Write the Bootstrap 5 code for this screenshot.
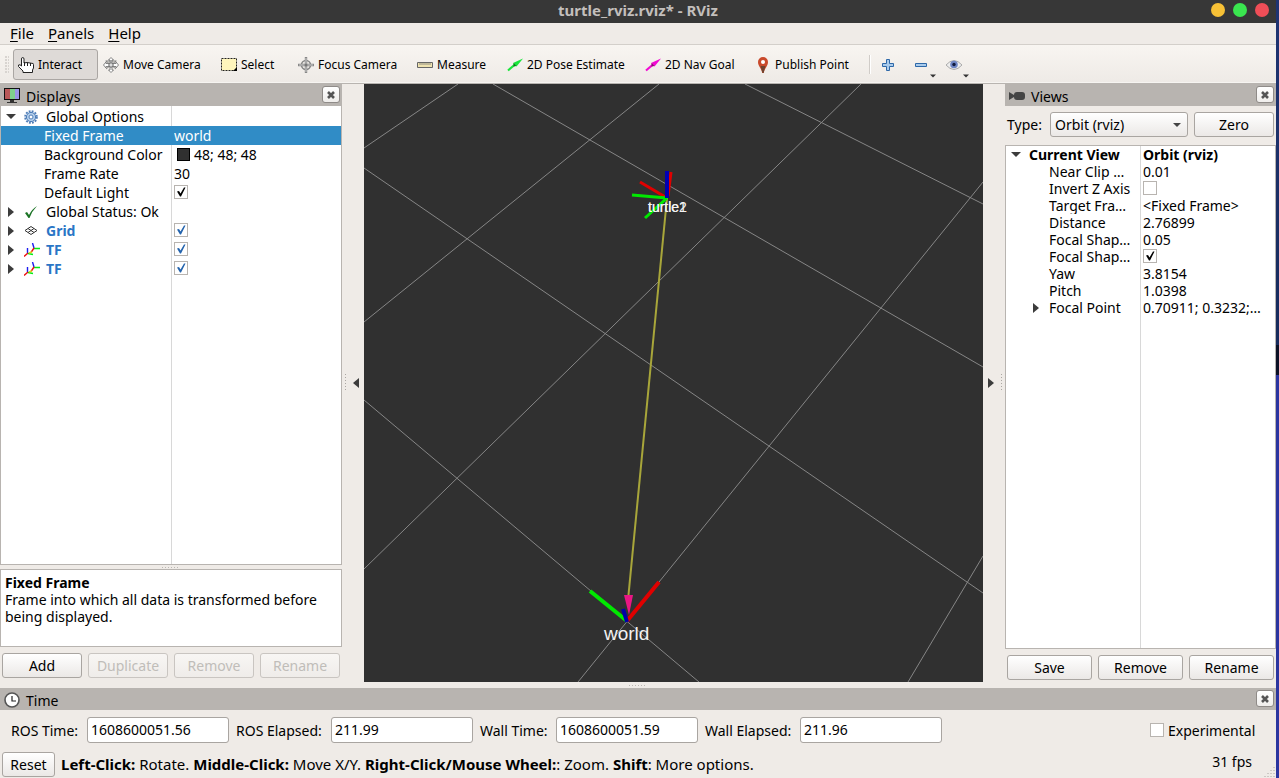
<!DOCTYPE html>
<html lang="en">
<head>
<meta charset="utf-8">
<meta name="viewport" content="width=device-width, initial-scale=1">
<title>turtle_rviz.rviz* - RViz</title>
<link rel="stylesheet" href="https://cdn.jsdelivr.net/npm/bootstrap@5.3.0/dist/css/bootstrap.min.css">
<style>
  :root { --win: #efebe7; --line: #b8b4b0; --dock: #b8b4b0; --sel: #308cc6; }
  body { font-family: "Noto Sans", "Open Sans", sans-serif; font-size: 14px; line-height: 17px; color: #000; background: var(--win); }
  .desktop-edge { width: 3px; background: linear-gradient(#1f3473 0, #172b5c 345px, #0c1226 345px, #0c1226 375px, #2b35a0 375px); }
  .title-bar { height: 23px; background: #373737; color: #c3bfbc; font-weight: 700; font-size: 15px; line-height: 20px; }
  .win-dots { top: 3px; right: 7px; gap: 8px; }
  .win-dots button { width: 14px; height: 14px; border: 0; padding: 0; border-radius: 50%; }
  .dot-min { background: #f7c136; } .dot-max { background: #3ae64f; } .dot-close { background: #f04e57; }
  .menu-bar { height: 22px; border-bottom: 1px solid #d3cfca; padding-left: 10px; gap: 14px; font-size: 15px; }
  .menu-bar a { color: #000; text-decoration: none; line-height: 21px; }
  .menu-bar u { text-underline-offset: 2px; }
  .tool-bar { height: 39px; background: linear-gradient(#f8f5f1, #eeeae6); border-bottom: 1px solid var(--line); padding: 4px 0 3px 5px; box-shadow: inset 0 -1px #f6f4f1; }
  .grip { width: 4px; height: 17px; margin-right: 4px; background: radial-gradient(circle at 1px 1px, #d8d4d0 1px, transparent 1px) 0 0 / 3px 3px; }
  .tool { display: flex; align-items: center; gap: 4px; padding: 0 0 0 4px; height: 31px; border: 1px solid transparent; border-radius: 3px; background: none; color: #000; font-size: 12px; white-space: nowrap; text-align: left; }
  .tool svg { flex: none; width: 16px; height: 16px; }
  .tool.active { background: #dedad7; border-color: #aaa6a3; }
  .w-interact { width: 85px; } .w-move { width: 118px; } .w-select { width: 77px; } .w-focus { width: 119px; }
  .w-measure { width: 90px; } .w-pose { width: 138px; } .w-nav { width: 110px; } .w-point { width: 119px; }
  .tool-sep { width: 2px; height: 19px; background: #d0ccc8; border-right: 1px solid #fff; }
  .tool-small { width: 33px; height: 30px; border: 0; background: none; padding: 0 0 2px; }
  .drop-mark { right: 1px; bottom: 1px; }
  .dock-title { height: 22px; background: var(--dock); padding: 2px 2px 0 4px; gap: 6px; flex: none; }
  .dock-close { width: 18px; height: 17px; padding: 0; margin-left: auto; margin-bottom: 3px; border: 1px solid #8f8b88; border-radius: 3px; background: linear-gradient(#fff, #efedeb); display: flex; align-items: center; justify-content: center; }
  .left-dock { width: 342px; } .right-dock { width: 271px; }
  .tree-box { border: 1px solid var(--line); background: linear-gradient(#d8d8d8, #d8d8d8) 0 0 / 1px 100% no-repeat #fff; }
  .tree-left { background-position-x: 170px; border-top: 0; padding-top: 1px; }
  .tree-right { background-position-x: 134px; }
  .tree-box table { width: 100%; table-layout: fixed; border-collapse: collapse; }
  .tree-box td { padding: 0; white-space: nowrap; overflow: hidden; }
  .tree-left td { height: 19px; line-height: 19px; }
  .tree-right td { height: 17px; line-height: 17px; }
  .tree-left col:first-child { width: 173px; } .tree-right col:first-child { width: 137px; }
  .cell { display: flex; align-items: center; }
  .tree-left .cell { height: 19px; } .tree-right .cell { height: 17px; }
  .fold { width: 19px; flex: none; display: flex; justify-content: center; }
  .tree-right .fold { width: 23px; padding-right: 3px; }
  .kind { width: 26px; flex: none; padding-left: 4px; display: flex; }
  .tree-box td.sub-item { padding-left: 43px; }
  .nested { padding-left: 20px; }
  .picked { background: var(--sel); color: #fff; }
  .shown { color: #2a76c6; font-weight: 700; }
  .swatch { width: 13px; height: 13px; margin: 0 4px 0 3px; background: #303030; border: 1px solid #000; }
  .form-check-input.box { width: 14px; height: 14px; margin: 0; border: 1px solid var(--line); border-radius: 0; background-color: #fff; flex: none; float: none; }
  .tree-box .form-check-input.box { margin-bottom: 2px; }
  .form-check-input.box:checked { background-color: #fff; border-color: var(--line); background-image: url("data:image/svg+xml,%3Csvg xmlns='http://www.w3.org/2000/svg' viewBox='0 0 12 12'%3E%3Cpath d='M2 5.5 4 5l1.500 2.500L9 1.500h1.500L6 10.500H5z' fill='%23000'/%3E%3C/svg%3E"); background-size: 12px; }
  .form-check-input.box.blue:checked { background-image: url("data:image/svg+xml,%3Csvg xmlns='http://www.w3.org/2000/svg' viewBox='0 0 12 12'%3E%3Cpath d='M2 5.5 4 5l1.500 2.500L9 1.500h1.500L6 10.500H5z' fill='%232363ad'/%3E%3C/svg%3E"); }
  .help-box { height: 78px; border: 1px solid var(--line); background: #fff; padding: 4px; }
  .dots-h { width: 18px; height: 1px; background: repeating-linear-gradient(90deg, #bbb7b3 0 1px, transparent 1px 3px); }
  .dots-v { width: 1px; height: 18px; background: repeating-linear-gradient(#aaa6a2 0 1px, transparent 1px 3px); }
  .split-h { height: 4px; } .split-main { height: 6px; }
  .btn-qt { --bs-btn-padding-x: 0; --bs-btn-padding-y: 0; --bs-btn-font-size: 14px; --bs-btn-line-height: 17px; --bs-btn-border-radius: 3px; --bs-btn-border-color: #a9a5a1; --bs-btn-color: #000; --bs-btn-disabled-color: #c0bdb9; --bs-btn-disabled-border-color: #c9c5c1; --bs-btn-disabled-opacity: 1; height: 25px; flex: 1 1 0; background: linear-gradient(#fff, #ebe8e6); }
  .btn-qt:disabled { background: linear-gradient(#f8f6f4, #efece9); }
  .left-buttons { padding: 6px 2px 4px; gap: 6px; }
  .right-buttons { padding: 6px 2px 2px; gap: 6px; }
  .side-bar { width: 22px; flex: none; border: 0; background: none; padding: 0 3px; gap: 7px; }
  .view3d { background: #303030; min-width: 0; }
  .view3d text { font-family: "Liberation Sans", Arial, sans-serif; fill: #f2f2f2; }
  .type-row { padding: 6px 2px 8px; gap: 6px; }
  .type-row select { height: 25px; width: 138px; font-size: 14px; line-height: 17px; padding: 0 20px 0 4px; color: #000; border: 1px solid #a9a5a1; border-radius: 3px; background: url("data:image/svg+xml,%3Csvg xmlns='http://www.w3.org/2000/svg' viewBox='0 0 8 4'%3E%3Cpath d='M0 0h8L4 4z' fill='%23444'/%3E%3C/svg%3E") right 6px center / 8px 4px no-repeat, linear-gradient(#fff, #ebe8e6); }
  .type-row label { width: 37px; white-space: nowrap; }
  .time-row { padding: 7px 17px 0 11px; gap: 7px; }
  .time-row input.form-control { width: 142px; height: 26px; font-size: 14px; line-height: 17px; padding: 0 3px 1px; color: #000; border: 1px solid #a9a5a1; border-radius: 3px; flex: none; }
  .lab-short { width: 69px; } .lab-long { width: 88px; } .lab-check { width: 91px; }
  .time-row label { white-space: nowrap; padding-top: 1px; flex: none; }
  .status-row { padding: 9px 0 1px 2px; gap: 6px; }
  .status-row .btn-qt { flex: none; width: 53px; }
  .mouse-help { font-size: 15px; }
  .fps { padding-right: 24px; padding-bottom: 6px; }
  .size-grip { right: 0; bottom: 0; }
</style>
</head>
<body>
<svg width="0" height="0" class="position-absolute" aria-hidden="true">
  <defs>
    <symbol id="x-mark" viewBox="0 0 8 8"><path d="M1 1l6 6M7 1L1 7" stroke="#555" stroke-width="2.600"/></symbol>
    <symbol id="open" viewBox="0 0 10 6"><path d="M0 0h10L5 5z" fill="#3c3c3c"/></symbol>
    <symbol id="closed" viewBox="0 0 6 10"><path d="M0 0v10l6-5z" fill="#3c3c3c"/></symbol>
    <symbol id="axes" viewBox="0 0 16 14"><g fill="none" stroke-width="1.400"><path d="M10 5L8.500 0M3.500 5v5" stroke="#1c1cf0"/><path d="M10 5.500h6M4 10.500l5 1" stroke="#0e1"/><path d="M10 5L7 9.500M4 10l-4 3.500" stroke="#e11"/><path d="M5 10l3-1" stroke="#e5d020"/></g></symbol>
    <symbol id="drop" viewBox="0 0 6 3"><path d="M0 0h6L3 3z" fill="#333"/></symbol>
  </defs>
</svg>
<div class="d-flex vh-100">
<div class="d-flex flex-column flex-grow-1 overflow-hidden">
  <header class="title-bar position-relative text-center flex-shrink-0">turtle_rviz.rviz* - RViz
    <div class="win-dots position-absolute d-flex"><button class="dot-min" aria-label="Minimize"></button><button class="dot-max" aria-label="Maximize"></button><button class="dot-close" aria-label="Close"></button></div>
  </header>
  <nav class="menu-bar d-flex flex-shrink-0"><a href="#"><u>F</u>ile</a><a href="#"><u>P</u>anels</a><a href="#"><u>H</u>elp</a></nav>
  <div class="tool-bar d-flex align-items-center flex-shrink-0" role="toolbar">
    <span class="grip"></span>
    <button class="tool w-interact active"><svg viewBox="0 0 16 16"><path d="M3.500 9V2q0-1.500 1.200-1.500T6 2v4l3-.5 3 .5 3 .5q.5 0 .5 1V11l-1 2v2.500H5V14L.5 9.500V8q1.500-1 3 1z" fill="#fff" stroke="#222"/><path d="M6.500 5v4M9.500 6v3M12.500 6v3" stroke="#222"/></svg>Interact</button>
    <button class="tool w-move"><svg viewBox="0 0 16 16"><path d="M8 .5L10.500 3H9v3.500h4V5l2.500 3-2.500 3V9.500H9V13h1.500L8 15.500 5.500 13H7V9.500H3V11L.5 8 3 5v1.500h4V3H5.500zM2.500 4h11M3 12l10-8M13 12L3 4" fill="#fff" stroke="#777" stroke-width=".9"/><circle cx="8" cy="8" r="2.200" fill="#ddd" stroke="#666"/></svg>Move Camera</button>
    <button class="tool w-select"><svg viewBox="0 0 16 16"><path d="M.5 1.500h15v12H.5z" fill="#fff6bc" stroke="#222" stroke-dasharray="2 1"/><path d="M16 10v4h-4z" fill="#000"/></svg>Select</button>
    <button class="tool w-focus"><svg viewBox="0 0 16 16"><circle cx="8" cy="8" r="4.500" fill="none" stroke="#888" stroke-width="1.600"/><path d="M8 0v16M0 8h16" stroke="#888" stroke-width="2.400"/><path d="M8 1v14M1 8h14" stroke="#ddd" stroke-width=".8"/><circle cx="8" cy="8" r="1.500" fill="#777"/></svg>Focus Camera</button>
    <button class="tool w-measure"><svg viewBox="0 0 16 16"><path d="M.5 5.500h15v5H.5z" fill="#efe3b0" stroke="#666"/><path d="M3 6v2M5 6v2M7 6v2M9 6v2M11 6v2M13 6v2" stroke="#777" stroke-width=".8"/></svg>Measure</button>
    <button class="tool w-pose"><svg viewBox="0 0 16 16"><path d="M1 13.500L8 7.500" stroke="#1be53c" stroke-width="2.200"/><path d="M16 1.500L6 6l3.500 3.500z" fill="#1be53c"/><path d="M6.500 6l3 3-3 .5z" fill="#0a7a1c"/></svg>2D Pose Estimate</button>
    <button class="tool w-nav"><svg viewBox="0 0 16 16"><path d="M1 13.500L8 7.500" stroke="#f10ad2" stroke-width="2.200"/><path d="M16 1.500L6 6l3.500 3.500z" fill="#f10ad2"/><path d="M6.500 6l3 3-3 .5z" fill="#84106f"/></svg>2D Nav Goal</button>
    <button class="tool w-point"><svg viewBox="0 0 16 16"><path d="M8 0a5 5 0 0 1 5 5c0 4-3.500 6-4.200 11H7.200C6.500 11 3 9 3 5a5 5 0 0 1 5-5z" fill="#c94a2c"/><path d="M10.500 9L8.500 16H7.500L5.500 9z" fill="#6e4330"/><circle cx="8" cy="5" r="2" fill="#fff"/></svg>Publish Point</button>
    <span class="tool-sep"></span>
    <button class="tool-small" aria-label="Add tool"><svg width="14" height="14" viewBox="0 0 14 14"><path d="M5.500 1.500h3v4h4v3h-4v4h-3v-4h-4v-3h4z" fill="#a9cbec" stroke="#2e68a8"/></svg></button>
    <button class="tool-small position-relative" aria-label="Remove tool"><svg width="14" height="14" viewBox="0 0 14 14"><path d="M1.500 5.500h11v3h-11z" fill="#a9cbec" stroke="#2e68a8"/></svg><svg class="position-absolute drop-mark" width="6" height="6"><use href="#drop"/></svg></button>
    <button class="tool-small position-relative" aria-label="Tool visibility"><svg width="16" height="14" viewBox="0 0 16 14"><path d="M0 7q8-9 16 0-8 9-16 0z" fill="#eee" stroke="#aaa"/><circle cx="8" cy="6.500" r="3.800" fill="#6f86c4"/><circle cx="8" cy="6.500" r="1.700" fill="#111a3c"/></svg><svg class="position-absolute drop-mark" width="6" height="6"><use href="#drop"/></svg></button>
  </div>

  <main class="d-flex flex-grow-1 overflow-hidden">
    <section class="left-dock d-flex flex-column flex-shrink-0">
      <div class="dock-title d-flex align-items-center"><svg width="16" height="16" viewBox="0 0 16 16"><path d="M0 0h16v12H0z" fill="#111"/><path d="M1 1h5v10H1z" fill="#b95959"/><path d="M6 1h5v10H6z" fill="#7ed08c"/><path d="M11 1h4v10h-4z" fill="#9a94e6"/><path d="M6 12h4v2H6zM3 14h10v1H3z" fill="#333"/></svg>Displays<button class="dock-close" aria-label="Close Displays"><svg width="8" height="8"><use href="#x-mark"/></svg></button></div>
      <div class="tree-box tree-left flex-grow-1 overflow-hidden">
        <table><colgroup><col><col></colgroup>
          <tr><td><div class="cell"><span class="fold"><svg width="10" height="6"><use href="#open"/></svg></span><span class="kind"><svg width="14" height="14" viewBox="0 0 14 14"><circle cx="7" cy="7" r="5.800" fill="none" stroke="#4e7db8" stroke-width="2" stroke-dasharray="1.800 1.240"/><circle cx="7" cy="7" r="4.600" fill="#b2cdea" stroke="#4e7db8"/><circle cx="7" cy="7" r="2" fill="#fff" stroke="#4e7db8"/></svg></span>Global Options</div></td><td></td></tr>
          <tr class="picked"><td class="sub-item">Fixed Frame</td><td>world</td></tr>
          <tr><td class="sub-item">Background Color</td><td><div class="cell"><span class="swatch"></span>48; 48; 48</div></td></tr>
          <tr><td class="sub-item">Frame Rate</td><td>30</td></tr>
          <tr><td class="sub-item"><label for="light">Default Light</label></td><td><div class="cell"><input class="form-check-input box" type="checkbox" id="light" checked></div></td></tr>
          <tr><td><div class="cell"><span class="fold"><svg width="6" height="10"><use href="#closed"/></svg></span><span class="kind"><svg width="14" height="14" viewBox="0 0 14 14"><path d="M1 8l2-1 2 3q3-6 8-9Q8 6 5.500 13h-1z" fill="#1c7426"/></svg></span>Global Status: Ok</div></td><td></td></tr>
          <tr><td><div class="cell"><span class="fold"><svg width="6" height="10"><use href="#closed"/></svg></span><span class="kind"><svg width="14" height="14" viewBox="0 0 14 14"><path d="M1 6.500l6-4 6 4-6 4zM4 4.500l6 4M10 4.500l-6 4" fill="none" stroke="#333"/></svg></span><label class="shown" for="grid">Grid</label></div></td><td><div class="cell"><input class="form-check-input box blue" type="checkbox" id="grid" checked></div></td></tr>
          <tr><td><div class="cell"><span class="fold"><svg width="6" height="10"><use href="#closed"/></svg></span><span class="kind"><svg width="16" height="14"><use href="#axes"/></svg></span><label class="shown" for="tf1">TF</label></div></td><td><div class="cell"><input class="form-check-input box blue" type="checkbox" id="tf1" checked></div></td></tr>
          <tr><td><div class="cell"><span class="fold"><svg width="6" height="10"><use href="#closed"/></svg></span><span class="kind"><svg width="16" height="14"><use href="#axes"/></svg></span><label class="shown" for="tf2">TF</label></div></td><td><div class="cell"><input class="form-check-input box blue" type="checkbox" id="tf2" checked></div></td></tr>
        </table>
      </div>
      <div class="split-h d-flex justify-content-center align-items-center"><span class="dots-h"></span></div>
      <div class="help-box"><strong>Fixed Frame</strong><br>Frame into which all data is transformed before being displayed.</div>
      <div class="d-flex left-buttons"><button class="btn btn-qt">Add</button><button class="btn btn-qt" disabled>Duplicate</button><button class="btn btn-qt" disabled>Remove</button><button class="btn btn-qt" disabled>Rename</button></div>
    </section>
    <button class="side-bar d-flex align-items-center" aria-label="Collapse left panel"><span class="dots-v"></span><svg width="6" height="10" viewBox="0 0 6 10"><path d="M6 0v10L0 5z" fill="#3c3c3c"/></svg></button>

    <svg class="view3d flex-grow-1 h-100" viewBox="364 84 619 598" preserveAspectRatio="xMidYMid slice">
      <g stroke="#868686" stroke-width="1">
        <path d="M364 148L458 84M364 322L659 84M364 569L861 84M578 682L983 182M908 682L983 556"/>
        <path d="M745 84L983 204M493 84L983 367M364 168L983 593M364 400L699 682"/>
      </g>
      <path d="M667 198L628 600" stroke="#a8a63a" stroke-width="2"/>
      <g stroke-width="3">
        <path d="M667 198L640 182M668 196L671 172" stroke="#e00000"/>
        <path d="M667 198L632 195M667 198L645 218" stroke="#00e800"/>
      </g>
      <path d="M667 198V171" stroke="#0000b4" stroke-width="4"/>
      <path d="M627 621L590 591" stroke="#00e800" stroke-width="4"/>
      <path d="M627 621L659 582" stroke="#e00000" stroke-width="4"/>
      <path d="M624 595h9l-4 20z" fill="#ea1684"/>
      <path d="M627 622L623 609" stroke="#0000a8" stroke-width="4"/>
      <text x="648" y="212" font-size="14">turtle1</text>
      <text x="648" y="212" font-size="14">turtle2</text>
      <text x="604" y="640" font-size="19">world</text>
    </svg>

    <button class="side-bar d-flex align-items-center justify-content-end" aria-label="Collapse right panel"><svg width="6" height="10"><use href="#closed"/></svg><span class="dots-v"></span></button>
    <section class="right-dock d-flex flex-column flex-shrink-0">
      <div class="dock-title d-flex align-items-center"><svg width="16" height="16" viewBox="0 0 16 16"><path d="M0 4l5 3V9L0 12z" fill="#444"/><rect x="5" y="4" width="11" height="8" rx="3" fill="#444"/></svg>Views<button class="dock-close" aria-label="Close Views"><svg width="8" height="8"><use href="#x-mark"/></svg></button></div>
      <div class="type-row d-flex align-items-center"><label for="vtype">Type:</label><select id="vtype" class="form-select"><option>Orbit (rviz)</option></select><button class="btn btn-qt">Zero</button></div>
      <div class="tree-box tree-right flex-grow-1 overflow-hidden">
        <table><colgroup><col><col></colgroup>
          <tr class="fw-bold"><td><div class="cell"><span class="fold"><svg width="10" height="6"><use href="#open"/></svg></span>Current View</div></td><td>Orbit (rviz)</td></tr>
          <tr><td class="sub-item">Near Clip …</td><td>0.01</td></tr>
          <tr><td class="sub-item"><label for="inv">Invert Z Axis</label></td><td><div class="cell"><input class="form-check-input box" type="checkbox" id="inv"></div></td></tr>
          <tr><td class="sub-item">Target Fra…</td><td>&lt;Fixed Frame&gt;</td></tr>
          <tr><td class="sub-item">Distance</td><td>2.76899</td></tr>
          <tr><td class="sub-item">Focal Shap…</td><td>0.05</td></tr>
          <tr><td class="sub-item"><label for="fshape">Focal Shap…</label></td><td><div class="cell"><input class="form-check-input box" type="checkbox" id="fshape" checked></div></td></tr>
          <tr><td class="sub-item">Yaw</td><td>3.8154</td></tr>
          <tr><td class="sub-item">Pitch</td><td>1.0398</td></tr>
          <tr><td><div class="cell nested"><span class="fold"><svg width="6" height="10"><use href="#closed"/></svg></span>Focal Point</div></td><td>0.70911; 0.3232;…</td></tr>
        </table>
      </div>
      <div class="d-flex right-buttons"><button class="btn btn-qt">Save</button><button class="btn btn-qt">Remove</button><button class="btn btn-qt">Rename</button></div>
    </section>
  </main>
  <div class="split-main d-flex justify-content-center align-items-center flex-shrink-0"><span class="dots-h"></span></div>

  <section class="flex-shrink-0 position-relative">
    <div class="dock-title d-flex align-items-center"><svg width="16" height="16" viewBox="0 0 16 16"><circle cx="8" cy="8" r="7" fill="#fff" stroke="#555" stroke-width="1.600"/><path d="M8 4v5h4" fill="none" stroke="#222" stroke-width="1.200"/></svg>Time<button class="dock-close" aria-label="Close Time"><svg width="8" height="8"><use href="#x-mark"/></svg></button></div>
    <div class="time-row d-flex align-items-center">
      <label class="lab-short" for="t1">ROS Time:</label><input class="form-control" id="t1" value="1608600051.56">
      <label class="lab-long" for="t2">ROS Elapsed:</label><input class="form-control" id="t2" value="211.99">
      <label class="lab-short" for="t3">Wall Time:</label><input class="form-control" id="t3" value="1608600051.59">
      <label class="lab-long" for="t4">Wall Elapsed:</label><input class="form-control" id="t4" value="211.96">
      <span class="ms-auto d-flex align-items-center gap-1"><input class="form-check-input box" type="checkbox" id="exp"><label class="lab-check" for="exp">Experimental</label></span>
    </div>
    <div class="status-row d-flex align-items-center">
      <button class="btn btn-qt">Reset</button>
      <span class="mouse-help"><b>Left-Click:</b> Rotate. <b>Middle-Click:</b> Move X/Y. <b>Right-Click/Mouse Wheel:</b>: Zoom. <b>Shift</b>: More options.</span>
      <span class="fps ms-auto">31 fps</span>
    </div>
    <svg class="size-grip position-absolute" width="12" height="12" viewBox="0 0 12 12"><path d="M10 1v11M7 4v8M4 7v5M1 10v2" stroke="#aaa6a2" stroke-dasharray="1 2"/></svg>
  </section>
</div>
<div class="desktop-edge flex-shrink-0"></div>
</div>
<script src="https://cdn.jsdelivr.net/npm/bootstrap@5.3.0/dist/js/bootstrap.bundle.min.js"></script>
</body>
</html>
